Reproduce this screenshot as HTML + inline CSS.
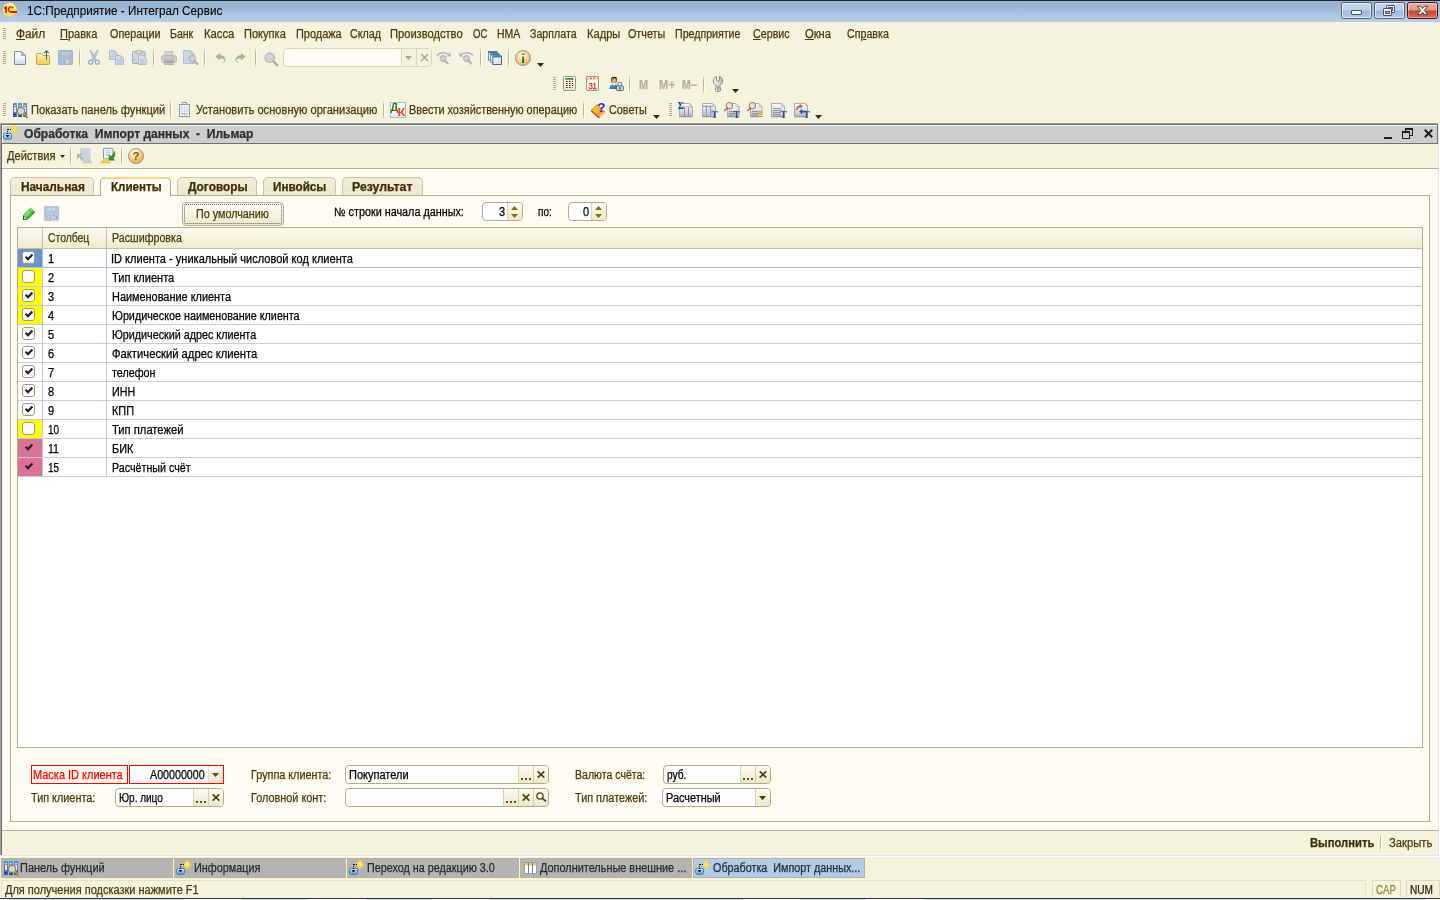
<!DOCTYPE html>
<html lang="ru">
<head>
<meta charset="utf-8">
<title>1С:Предприятие - Интеграл Сервис</title>
<style>
html,body{margin:0;padding:0;}
body{width:1440px;height:900px;overflow:hidden;position:relative;background:#f5f2dd;font-family:"Liberation Sans",sans-serif;font-size:12px;line-height:14px;color:#4a3a0a;}
#app{position:absolute;left:0;top:0;width:1440px;height:900px;overflow:hidden;will-change:transform;}
.a{position:absolute;}
.t{position:absolute;white-space:nowrap;height:14px;line-height:14px;font-size:12px;transform-origin:0 0;-webkit-text-stroke:0.25px currentColor;}
.k{color:#000;}
.b{font-weight:bold;}
u{text-decoration:underline;text-decoration-thickness:1px;text-underline-offset:1px;}
svg{position:absolute;overflow:visible;}
.sep{position:absolute;width:2px;background:linear-gradient(to bottom,rgba(194,182,136,0),#c2b688 25%,#c2b688 75%,rgba(194,182,136,0)) left/1px 100% no-repeat,linear-gradient(to bottom,rgba(255,255,255,0),#fffefa 25%,#fffefa 75%,rgba(255,255,255,0)) right/1px 100% no-repeat;}
.grip{position:absolute;width:3px;background:repeating-linear-gradient(to bottom,#b2aa82 0,#b2aa82 1px,transparent 1px,transparent 2px);}
.inp{position:absolute;box-sizing:border-box;height:19px;border:1px solid #b3ac86;border-radius:4px;background:#fff;overflow:hidden;}
.ib{position:absolute;top:0;bottom:0;width:15px;border-left:1px solid #d6d0b0;background:linear-gradient(#fdfcf5,#ece7cb);}
</style>
</head>
<body>
<div id="app">
<!-- ===== OS title bar ===== -->
<div class="a" style="left:0;top:0;width:1440px;height:22px;background:linear-gradient(#98b3d3 0,#9bb6d6 30%,#adc8e4 72%,#b7d0eb 100%);"></div>
<div class="a" style="left:0;top:0;width:1440px;height:1px;background:#242424;"></div>
<!-- app logo -->
<svg style="left:2px;top:2px" width="16" height="16" viewBox="0 0 16 16">
<defs><linearGradient id="lg1" x1="0" y1="0" x2="0" y2="1"><stop offset="0" stop-color="#fffce8"/><stop offset="0.3" stop-color="#fff36a"/><stop offset="0.6" stop-color="#ffe93c"/><stop offset="0.8" stop-color="#fbd98e"/><stop offset="1" stop-color="#f6d27e"/></linearGradient></defs>
<circle cx="7.9" cy="7.9" r="7.1" fill="url(#lg1)" stroke="#e6c24a" stroke-width="0.7"/>
<path d="M2.2 6.3L4 5V10.9" fill="none" stroke="#e80a0a" stroke-width="1.6"/>
<path d="M11.2 6.1A2.6 2.6 0 1 0 9.2 10.1" fill="none" stroke="#e80a0a" stroke-width="1.3"/>
<path d="M8.8 10H15" fill="none" stroke="#e80a0a" stroke-width="1.9"/>
</svg>
<span class="t k" style="left:26.70px;transform:scaleX(0.9778);top:4px;-webkit-text-stroke:0.1px #000;">1С:Предприятие - Интеграл Сервис</span>
<!-- caption buttons -->
<div class="a" style="left:1341px;top:2px;width:31px;height:17px;box-sizing:border-box;border:1px solid #56627a;border-radius:2.5px;background:linear-gradient(#c6d8ee 0,#bdd1ea 48%,#9fbadb 52%,#b0c8e6 100%);box-shadow:inset 0 0 0 1px rgba(255,255,255,.55);"></div>
<div class="a" style="left:1351px;top:10px;width:11px;height:5px;box-sizing:border-box;border:1px solid #4b5365;border-radius:1px;background:#f2f2f2;"></div>
<div class="a" style="left:1374px;top:2px;width:31px;height:17px;box-sizing:border-box;border:1px solid #56627a;border-radius:2.5px;background:linear-gradient(#c6d8ee 0,#bdd1ea 48%,#9fbadb 52%,#b0c8e6 100%);box-shadow:inset 0 0 0 1px rgba(255,255,255,.55);"></div>
<div class="a" style="left:1386px;top:5px;width:9px;height:8px;box-sizing:border-box;border:1px solid #4b5365;border-radius:1px;background:#f2f2f2;"></div>
<div class="a" style="left:1388px;top:7px;width:5px;height:4px;box-sizing:border-box;border:1px solid #4b5365;background:#b4c8e2;"></div>
<div class="a" style="left:1383px;top:8px;width:9px;height:8px;box-sizing:border-box;border:1px solid #4b5365;border-radius:1px;background:#f2f2f2;"></div>
<div class="a" style="left:1385px;top:11px;width:5px;height:3px;box-sizing:border-box;border:1px solid #4b5365;background:#a4bcdb;"></div>
<div class="a" style="left:1407px;top:2px;width:31px;height:17px;box-sizing:border-box;border:1px solid #4f1414;border-radius:2.5px;background:linear-gradient(#eab0a2 0,#e29482 48%,#c4472b 52%,#d8705a 100%);box-shadow:inset 0 0 0 1px rgba(255,255,255,.35);"></div>
<svg style="left:1416px;top:5px" width="13" height="11" viewBox="0 0 13 11"><path d="M1.2 1.3H4.6L6.5 3.5L8.4 1.3H11.8L8.3 5.4L11.8 9.6H8.4L6.5 7.3L4.6 9.6H1.2L4.7 5.4Z" fill="#f6f6f6" stroke="#46404e" stroke-width="1" stroke-linejoin="round"/></svg>
<!-- ===== main menu ===== -->
<div class="grip" style="left:3px;top:28px;height:12px;"></div>
<span class="t" style="left:16.30px;transform:scaleX(0.9864);top:27px;"><u>Ф</u>айл</span>
<span class="t" style="left:60.40px;transform:scaleX(0.9202);top:27px;"><u>П</u>равка</span>
<span class="t" style="left:110.40px;transform:scaleX(0.9020);top:27px;">Операции</span>
<span class="t" style="left:169.80px;transform:scaleX(0.8795);top:27px;">Банк</span>
<span class="t" style="left:203.70px;transform:scaleX(0.9399);top:27px;">Касса</span>
<span class="t" style="left:243.70px;transform:scaleX(0.9213);top:27px;">Покупка</span>
<span class="t" style="left:295.60px;transform:scaleX(0.9105);top:27px;">Продажа</span>
<span class="t" style="left:350.40px;transform:scaleX(0.8956);top:27px;">Склад</span>
<span class="t" style="left:390.40px;transform:scaleX(0.9279);top:27px;">Производство</span>
<span class="t" style="left:472.70px;transform:scaleX(0.7963);top:27px;">ОС</span>
<span class="t" style="left:496.70px;transform:scaleX(0.8739);top:27px;">НМА</span>
<span class="t" style="left:530.00px;transform:scaleX(0.8871);top:27px;">Зарплата</span>
<span class="t" style="left:586.50px;transform:scaleX(0.9281);top:27px;">Кадры</span>
<span class="t" style="left:628.40px;transform:scaleX(0.8959);top:27px;">Отчеты</span>
<span class="t" style="left:675.00px;transform:scaleX(0.8845);top:27px;">Предприятие</span>
<span class="t" style="left:753.30px;transform:scaleX(0.8931);top:27px;"><u>С</u>ервис</span>
<span class="t" style="left:805.00px;transform:scaleX(0.9323);top:27px;"><u>О</u>кна</span>
<span class="t" style="left:846.90px;transform:scaleX(0.8882);top:27px;">Сп<u>р</u>авка</span>
<!-- ===== toolbar row 1 ===== -->
<div class="grip" style="left:3px;top:51px;height:13px;"></div>
<svg style="left:14px;top:51px" width="12" height="14" viewBox="0 0 12 14"><defs><linearGradient id="nd" x1="0" y1="0" x2="0" y2="1"><stop offset="0" stop-color="#ffffff"/><stop offset="0.5" stop-color="#f2f7fb"/><stop offset="1" stop-color="#c4dcee"/></linearGradient></defs><path d="M0.5 0.5H7.5L11.5 4.5V13.5H0.5Z" fill="url(#nd)" stroke="#7893ae" stroke-width="1"/><path d="M7.5 0.8V4.5H11.2Z" fill="#b4c6d8" stroke="#7893ae" stroke-width="0.6"/></svg>
<svg style="left:36px;top:50px" width="15" height="16" viewBox="0 0 15 16"><defs><linearGradient id="of" x1="0" y1="0" x2="0" y2="1"><stop offset="0" stop-color="#fdf4b8"/><stop offset="0.6" stop-color="#f6dc7a"/><stop offset="1" stop-color="#f0c858"/></linearGradient></defs><path d="M0.5 4.5C0.5 3.8 1 3.5 1.6 3.5H5.5L7.5 5.5H12.6C13.2 5.5 13.5 5.9 13.5 6.5V13.6C13.5 14.2 13.2 14.5 12.6 14.5H1.4C0.8 14.5 0.5 14.2 0.5 13.6Z" fill="url(#of)" stroke="#c8a042" stroke-width="1"/><path d="M10.5 9.8V1.2" stroke="#2f5f7f" stroke-width="1" fill="none"/><path d="M8.2 3.2L10.5 0.7L12.8 3.2" stroke="#2f5f7f" stroke-width="1.1" fill="none"/></svg>
<svg style="left:58px;top:50px" width="15" height="15" viewBox="0 0 15 15"><rect x="0.5" y="0.5" width="14" height="14" rx="0.8" fill="#aabfd5" stroke="#9cb4cc"/><rect x="3" y="1.3" width="9" height="4.6" fill="#bfd0dc" stroke="#9fb5c9" stroke-width="0.6"/><path d="M4 3H11M4 4.6H11" stroke="#a9c3cf" stroke-width="0.8"/><rect x="3.8" y="9" width="7.6" height="5" fill="#cfd0d2" stroke="#9fb5c9" stroke-width="0.6"/><rect x="5.2" y="10.2" width="1.8" height="3.2" fill="#8fa8c2"/></svg>
<div class="sep" style="left:79px;top:48px;height:20px;"></div>
<svg style="left:88px;top:50px" width="12" height="15" viewBox="0 0 12 15"><path d="M1.8 0.6L3.4 0.6L7.6 9.4L6 10.4Z" fill="#b4cbe0" stroke="#94a9c2" stroke-width="0.6"/><path d="M10.2 0.6L8.6 0.6L4.4 9.4L6 10.4Z" fill="#b4cbe0" stroke="#94a9c2" stroke-width="0.6"/><rect x="0.8" y="10.2" width="3.8" height="4" rx="1.2" fill="#f5f2dd" stroke="#8fa8c6" stroke-width="1.3"/><rect x="7.4" y="10.2" width="3.8" height="4" rx="1.2" fill="#f5f2dd" stroke="#8fa8c6" stroke-width="1.3"/></svg>
<svg style="left:109px;top:50px" width="15" height="15" viewBox="0 0 15 15"><path d="M0.5 0.5H5.5L8.5 3.5V9.5H0.5Z" fill="#d4d7de" stroke="#a9b9d6"/><path d="M5.5 0.8V3.5H8.2Z" fill="#b9c8de"/><path d="M2 5H6.5M2 6.8H6.5" stroke="#aec8e0" stroke-width="0.9"/><path d="M6.5 5.5H11.5L14.5 8.5V14.5H6.5Z" fill="#d4d7de" stroke="#a9b9d6"/><path d="M11.5 5.8V8.5H14.2Z" fill="#b9c8de"/><path d="M8 10H13M8 11.8H13M8 13.4H13" stroke="#aec8e0" stroke-width="0.9"/><path d="M6.5 14.6H14.5" stroke="#a4d0d4" stroke-width="0.7"/></svg>
<svg style="left:132px;top:50px" width="15" height="15" viewBox="0 0 15 15"><rect x="0.5" y="1.5" width="12.6" height="12" rx="0.8" fill="#d2d5db" stroke="#96accc"/><rect x="4" y="0.4" width="5.8" height="3.4" rx="1.2" fill="#dcdcc0" stroke="#b9a98a" stroke-width="0.8"/><path d="M6.5 5.5H11.5L14.5 8.5V14.5H6.5Z" fill="#d8dbe2" stroke="#a6c0de"/><path d="M8 9.6H12M8 11.4H13M8 13H13" stroke="#aec8e0" stroke-width="0.9"/><path d="M2.4 9H4.4V12H2.4Z" fill="none" stroke="#b8cce0" stroke-width="0.6"/></svg>
<div class="sep" style="left:153px;top:48px;height:20px;"></div>
<svg style="left:161px;top:51px" width="16" height="14" viewBox="0 0 16 14"><rect x="4" y="0.5" width="7.5" height="5" fill="#ccd9e6" stroke="#aabdd2" stroke-width="0.8"/><rect x="0.5" y="4.5" width="15" height="7" rx="2" fill="#cfc8c2" stroke="#b2b8c4" stroke-width="0.9"/><rect x="3.5" y="9" width="9" height="4.5" fill="#c4c4c8" stroke="#a9a9b0" stroke-width="0.8"/><path d="M4.5 11H11.5" stroke="#8e8e96" stroke-width="1.2"/><path d="M3 7.5H12" stroke="#d8c0b4" stroke-width="0.9"/><circle cx="12.3" cy="7.3" r="0.7" fill="#8fc88f"/></svg>
<svg style="left:183px;top:50px" width="16" height="15" viewBox="0 0 16 15"><path d="M0.5 0.5H7.5L11.5 4.5V13.5H0.5Z" fill="#c9d6e4" stroke="#adc1d8"/><path d="M7.5 0.8V4.5H11.2Z" fill="#b4c6da"/><circle cx="9.3" cy="8.8" r="3.1" fill="#c6d4ea" stroke="#c9b2a6" stroke-width="1.2"/><path d="M11.6 11.2L14.6 14.2" stroke="#b9a294" stroke-width="1.9" stroke-linecap="round"/></svg>
<div class="sep" style="left:204px;top:48px;height:20px;"></div>
<svg style="left:215px;top:53px" width="11" height="10" viewBox="0 0 11 10"><path d="M0.3 3.6L5 0V2.2C8.8 2.2 10.8 4.6 10.5 8.6C9.6 6.2 8 5.2 5 5.2V7.4Z" fill="#9fb69c"/><path d="M7.6 9.8C9.4 9.2 10 7.8 10 6.4" stroke="#c2cfc0" stroke-width="1.2" fill="none"/></svg>
<svg style="left:235px;top:53px" width="11" height="10" viewBox="0 0 11 10"><g transform="translate(11,0) scale(-1,1)"><path d="M0.3 3.6L5 0V2.2C8.8 2.2 10.8 4.6 10.5 8.6C9.6 6.2 8 5.2 5 5.2V7.4Z" fill="#9fb69c"/><path d="M7.6 9.8C9.4 9.2 10 7.8 10 6.4" stroke="#c2cfc0" stroke-width="1.2" fill="none"/></g></svg>
<div class="sep" style="left:255px;top:48px;height:20px;"></div>
<svg style="left:264px;top:52px" width="15" height="15" viewBox="0 0 15 15"><circle cx="5.7" cy="5.7" r="4.7" fill="#c6d3e8" stroke="#c6b2a8" stroke-width="1.3"/><path d="M9.2 9.2L13.4 13.4" stroke="#bda99c" stroke-width="2.3" stroke-linecap="round"/></svg>
<div class="a" style="left:283px;top:48px;width:149px;height:19px;box-sizing:border-box;border:1px solid #dcd6ba;border-radius:4px;background:#fffbf0;"></div>
<div class="a" style="left:401px;top:49px;width:30px;height:17px;background:#f5f2dd;border-left:1px solid #dcd6ba;box-sizing:border-box;border-radius:0 3px 3px 0;"></div>
<div class="a" style="left:416px;top:49px;width:1px;height:17px;background:#dcd6ba;"></div>
<svg style="left:405px;top:56px" width="7" height="4" viewBox="0 0 7 4"><path d="M0 0H7L3.5 4Z" fill="#a8a496"/></svg>
<svg style="left:420px;top:53px" width="9" height="9" viewBox="0 0 9 9"><path d="M1 1L8 8M8 1L1 8" stroke="#a8a496" stroke-width="1.3"/></svg>
<svg style="left:436px;top:51px" width="15" height="14" viewBox="0 0 15 14"><path d="M1 4.5C4 0.8 10 0.8 13.5 4" stroke="#a6bad0" stroke-width="1.5" fill="none"/><path d="M14.6 1.2V5.4H10.6Z" fill="#a6bad0"/><circle cx="7" cy="7.5" r="2.8" fill="#c6d3e8" stroke="#c6b2a8" stroke-width="1.2"/><path d="M9.2 9.8L11.9 12.6" stroke="#bda99c" stroke-width="1.9" stroke-linecap="round"/></svg>
<svg style="left:459px;top:51px" width="15" height="14" viewBox="0 0 15 14"><g transform="translate(15,0) scale(-1,1)"><path d="M1 4.5C4 0.8 10 0.8 13.5 4" stroke="#a6bad0" stroke-width="1.5" fill="none"/><path d="M14.6 1.2V5.4H10.6Z" fill="#a6bad0"/></g><circle cx="7.5" cy="7.5" r="2.8" fill="#c6d3e8" stroke="#c6b2a8" stroke-width="1.2"/><path d="M9.7 9.8L12.4 12.6" stroke="#bda99c" stroke-width="1.9" stroke-linecap="round"/></svg>
<div class="sep" style="left:480px;top:48px;height:20px;"></div>
<svg style="left:488px;top:51px" width="14" height="14" viewBox="0 0 14 14"><defs><linearGradient id="wg" x1="0" y1="0" x2="1" y2="1"><stop offset="0" stop-color="#ffffff"/><stop offset="1" stop-color="#c8daee"/></linearGradient></defs><rect x="0.5" y="0.5" width="8.6" height="8.6" fill="url(#wg)" stroke="#4a78a8" stroke-width="0.8"/><rect x="0.6" y="0.6" width="8.4" height="1.6" fill="#3f70a4"/><rect x="2.7" y="2.7" width="8.6" height="8.6" fill="url(#wg)" stroke="#4a78a8" stroke-width="0.8"/><rect x="2.8" y="2.8" width="8.4" height="1.6" fill="#3f70a4"/><rect x="4.9" y="4.9" width="8.6" height="8.6" fill="url(#wg)" stroke="#2f5f90" stroke-width="0.9"/><rect x="5" y="5" width="8.4" height="1.4" fill="#4a7ab0"/></svg>
<div class="sep" style="left:508px;top:48px;height:20px;"></div>
<svg style="left:515px;top:50px" width="16" height="16" viewBox="0 0 16 16"><defs><radialGradient id="ig" cx="0.45" cy="0.4" r="0.62"><stop offset="0" stop-color="#fff8ea"/><stop offset="0.55" stop-color="#f9d49a"/><stop offset="1" stop-color="#f2a53c"/></radialGradient><linearGradient id="ii" x1="0" y1="0" x2="0" y2="1"><stop offset="0" stop-color="#5aa236"/><stop offset="1" stop-color="#17640a"/></linearGradient></defs><circle cx="8" cy="8" r="7.5" fill="url(#ig)" stroke="#8e8e9c" stroke-width="0.9"/><rect x="6.3" y="5.9" width="3.6" height="7.6" rx="0.6" fill="#fff" opacity="0.55"/><rect x="6.9" y="6.4" width="2.4" height="6.6" fill="url(#ii)"/><path d="M6.9 5V3.9L9.3 2.9V5Z" fill="#3f8a22"/></svg>
<svg style="left:537px;top:63px" width="7" height="4" viewBox="0 0 7 4"><path d="M0 0H7L3.5 4Z" fill="#3a2a04"/></svg>
<!-- ===== toolbar row 2 ===== -->
<div class="grip" style="left:553px;top:77px;height:13px;"></div>
<svg style="left:563px;top:76px" width="13" height="15" viewBox="0 0 13 15"><defs><linearGradient id="cg" x1="0" y1="0" x2="0" y2="1"><stop offset="0" stop-color="#fffaf0"/><stop offset="1" stop-color="#fbdfb4"/></linearGradient></defs><rect x="0.5" y="0.5" width="12" height="14" rx="0.8" fill="url(#cg)" stroke="#8a9aa8"/><rect x="2.2" y="2" width="8" height="1.8" rx="0.5" fill="#3f9a2f"/><rect x="8.8" y="2.2" width="1.2" height="1.4" fill="#1f5a1a"/><rect x="3" y="5" width="1.6" height="1" fill="#2a2a30"/><rect x="6" y="5" width="1.6" height="1" fill="#2a2a30"/><rect x="9" y="5" width="1.0" height="1" fill="#e02a1a"/><rect x="3" y="7" width="1.6" height="1" fill="#2a2a30"/><rect x="6" y="7" width="1.6" height="1" fill="#2a2a30"/><rect x="9" y="7" width="1.0" height="1" fill="#2a2a30"/><rect x="3" y="9" width="1.6" height="1" fill="#2a2a30"/><rect x="6" y="9" width="1.6" height="1" fill="#2a2a30"/><rect x="9" y="9" width="1.0" height="1" fill="#2a2a30"/><rect x="3" y="11" width="1.6" height="1" fill="#2a2a30"/><rect x="6" y="11" width="1.6" height="1" fill="#2a2a30"/><rect x="9" y="11" width="1.0" height="1" fill="#c8782a"/></svg>
<svg style="left:586px;top:76px" width="13" height="15" viewBox="0 0 13 15"><defs><linearGradient id="cl" x1="0" y1="0" x2="0" y2="1"><stop offset="0" stop-color="#ffffff"/><stop offset="0.6" stop-color="#fffaf4"/><stop offset="1" stop-color="#fbdcc0"/></linearGradient></defs><rect x="0.5" y="0.5" width="12" height="14" rx="0.6" fill="url(#cl)" stroke="#8a9aa8"/><rect x="1" y="1" width="11" height="2.8" fill="#f6cc94"/><rect x="2.4" y="1.6" width="1.4" height="1.4" fill="#fff"/><rect x="5.8" y="1.6" width="1.4" height="1.4" fill="#fff"/><rect x="9.2" y="1.6" width="1.4" height="1.4" fill="#fff"/><path d="M3.8 2.3H5.8M7.2 2.3H9.2" stroke="#7a5a3a" stroke-width="0.8"/><text x="6.6" y="12.9" font-family="Liberation Sans, sans-serif" font-size="9.8" fill="#e82a1a" text-anchor="middle" textLength="8.4" lengthAdjust="spacingAndGlyphs" stroke="#e82a1a" stroke-width="0.3">31</text></svg>
<svg style="left:609px;top:76px" width="15" height="15" viewBox="0 0 15 15"><defs><radialGradient id="uh" cx="0.5" cy="0.6" r="0.6"><stop offset="0" stop-color="#f8c870"/><stop offset="1" stop-color="#c8821e"/></radialGradient><linearGradient id="ub" x1="0" y1="0" x2="1" y2="1"><stop offset="0" stop-color="#4fb0e8"/><stop offset="1" stop-color="#14609c"/></linearGradient></defs><circle cx="5.1" cy="3.9" r="3.1" fill="#2c2016"/><circle cx="5.1" cy="4.5" r="2.6" fill="url(#uh)"/><path d="M0.2 13C0.4 9.6 2.4 8.2 5.1 8.2C7.6 8.2 9.4 9.6 9.8 13Z" fill="url(#ub)"/><path d="M3.8 8.3L5.1 10L6.4 8.3Z" fill="#fff"/><path d="M8.9 10.2V8.2C8.9 5.8 12.7 5.8 12.7 8.2V10.2" stroke="#7f98b4" stroke-width="1.3" fill="none"/><rect x="7.4" y="9.8" width="6.9" height="4.8" rx="0.9" fill="#ccd6e2" stroke="#56677e" stroke-width="1"/><rect x="10.2" y="11" width="1.3" height="2.4" fill="#3e4c62"/></svg>
<div class="sep" style="left:629px;top:75px;height:19px;"></div>
<span class="t b" style="left:639.00px;transform:scaleX(0.9000);top:78px;color:#b9b0a6;">M</span>
<span class="t b" style="left:659.00px;transform:scaleX(0.9414);top:78px;color:#b9b0a6;">M+</span>
<span class="t b" style="left:682.00px;transform:scaleX(0.8826);top:78px;color:#b9b0a6;">M−</span>
<div class="sep" style="left:703px;top:75px;height:19px;"></div>
<svg style="left:713px;top:76px" width="11" height="16" viewBox="0 0 11 16"><defs><linearGradient id="wr" x1="0" y1="0" x2="1" y2="0"><stop offset="0" stop-color="#f4f4f4"/><stop offset="0.5" stop-color="#e2e2e2"/><stop offset="1" stop-color="#b4b4b4"/></linearGradient></defs><path d="M3.5 0.6C1.5 1.2 0.4 2.9 0.4 5C0.4 7 1.6 8.6 3.3 9.4L2.4 13.6C2.2 15 3.4 15.5 5 15.5C6.6 15.5 7.8 15 7.6 13.6L6.7 9.4C8.4 8.6 9.6 7 9.6 5C9.6 2.9 8.5 1.2 6.5 0.6L6.5 4.4C6.5 5.4 3.5 5.4 3.5 4.4Z" fill="url(#wr)" stroke="#7c7c80" stroke-width="0.9" stroke-linejoin="round"/><path d="M5 10.5V13.8" stroke="#8a8a8e" stroke-width="1.4" stroke-linecap="round"/></svg>
<svg style="left:732px;top:89px" width="7" height="4" viewBox="0 0 7 4"><path d="M0 0H7L3.5 4Z" fill="#3a2a04"/></svg>
<!-- ===== toolbar row 3 ===== -->
<div class="grip" style="left:3px;top:103px;height:13px;"></div>
<svg style="left:13px;top:103px" width="15" height="15" viewBox="0 0 15 15"><defs><linearGradient id="pf13103" x1="0" y1="0" x2="0" y2="1"><stop offset="0" stop-color="#4f90ea"/><stop offset="0.6" stop-color="#3a78dc"/><stop offset="1" stop-color="#1f4ebc"/></linearGradient></defs><rect x="0" y="0" width="3.9" height="14" rx="0.5" fill="url(#pf13103)"/><rect x="1" y="2.2" width="1.9" height="7" fill="#d4f0ff"/><rect x="1" y="3" width="1.9" height="0.9" fill="#e0623a"/><rect x="5.1" y="0" width="3.9" height="14" rx="0.5" fill="url(#pf13103)"/><rect x="6.1" y="2.2" width="1.9" height="7" fill="#d4f0ff"/><rect x="6.1" y="3" width="1.9" height="0.9" fill="#e0623a"/><rect x="10.2" y="0" width="3.9" height="14" rx="0.5" fill="url(#pf13103)"/><rect x="11.2" y="2.2" width="1.9" height="7" fill="#d4f0ff"/><rect x="11.2" y="3" width="1.9" height="0.9" fill="#e0623a"/><circle cx="1.6" cy="11.6" r="0.7" fill="#101830"/><rect x="5.6" y="13" width="3" height="0.8" fill="#163c9c"/><circle cx="8" cy="8" r="3.5" fill="#cfe8fc" stroke="#b07a22" stroke-width="1.2"/><path d="M8 5V11" stroke="#7fb0e0" stroke-width="1" opacity="0.7"/><path d="M11 11L14.2 14.2" stroke="#e8962a" stroke-width="2" stroke-linecap="round"/><path d="M11.3 12L13.8 14.8" stroke="#7a3a0a" stroke-width="0.7"/></svg>
<span class="t" style="left:30.80px;transform:scaleX(0.9258);top:103px;">Показать панель функций</span>
<div class="sep" style="left:170px;top:100px;height:20px;"></div>
<svg style="left:179px;top:102px" width="11" height="15" viewBox="0 0 11 15"><rect x="3.5" y="0.5" width="4" height="2.4" fill="#fafbfe" stroke="#8a9ab8" stroke-width="1"/><rect x="0.5" y="2.6" width="10" height="12" fill="#fbfcff" stroke="#8494b4" stroke-width="1"/><path d="M3 4V12M5.5 4V12M8 4V12M1.5 5.5H9.5M1.5 7.5H9.5M1.5 9.5H9.5M1.5 11.5H9.5" stroke="#cfd6e6" stroke-width="0.9"/><path d="M3.4 14V11.8H7.6V14" stroke="#9aa8c4" stroke-width="0.9" fill="none"/><path d="M5.5 12V14" stroke="#b4c0d6" stroke-width="0.8"/></svg>
<span class="t" style="left:195.80px;transform:scaleX(0.9262);top:103px;">Установить основную организацию</span>
<div class="sep" style="left:383px;top:100px;height:20px;"></div>
<svg style="left:390px;top:102px" width="16" height="16" viewBox="0 0 16 16"><defs><linearGradient id="dkg" x1="0" y1="0" x2="0" y2="1"><stop offset="0" stop-color="#ffffff"/><stop offset="0.6" stop-color="#ffffff"/><stop offset="1" stop-color="#d4e4f2"/></linearGradient></defs><rect x="0.5" y="0.5" width="15" height="15" fill="url(#dkg)" stroke="#a9bac4"/><text x="0.6" y="8.9" font-family="Liberation Sans, sans-serif" font-weight="bold" font-size="10.5" fill="#2a7a18" textLength="7.6" lengthAdjust="spacingAndGlyphs">Д</text><text x="7.6" y="14.2" font-family="Liberation Sans, sans-serif" font-weight="bold" font-size="11.5" fill="#f03a1e" textLength="7.8" lengthAdjust="spacingAndGlyphs">К</text></svg>
<span class="t" style="left:408.80px;transform:scaleX(0.9076);top:103px;">Ввести хозяйственную операцию</span>
<div class="sep" style="left:583px;top:100px;height:20px;"></div>
<svg style="left:591px;top:102px" width="15" height="16" viewBox="0 0 15 16"><defs><linearGradient id="sv" x1="0" y1="0.2" x2="1" y2="0.9"><stop offset="0" stop-color="#ffe81e"/><stop offset="0.55" stop-color="#fba028"/><stop offset="1" stop-color="#ee6a1a"/></linearGradient></defs><path d="M0.3 8.6L6 2.5L13.8 10.3L7.8 15.8Z" fill="url(#sv)" stroke="#b8501a" stroke-width="0.7"/><path d="M0.3 8.6L7.8 15.8" stroke="#9a3a0c" stroke-width="1.1"/><path d="M8.6 14.6L13.2 10.4" stroke="#fff" stroke-width="1.6"/><path d="M8.6 14.6L13.2 10.4" stroke="#e04a20" stroke-width="1.6" stroke-dasharray="0.7 0.9"/><text x="6.6" y="9.8" font-family="Liberation Sans, sans-serif" font-weight="bold" font-size="13" fill="#1818f4">?</text></svg>
<span class="t" style="left:609.00px;transform:scaleX(0.8996);top:103px;">Советы</span>
<svg style="left:653px;top:115px" width="7" height="4" viewBox="0 0 7 4"><path d="M0 0H7L3.5 4Z" fill="#3a2a04"/></svg>
<div class="grip" style="left:669px;top:103px;height:13px;"></div>
<svg style="left:678px;top:102px" width="16" height="16" viewBox="0 0 16 16"><defs><linearGradient id="dga" x1="0" y1="0" x2="0" y2="1"><stop offset="0" stop-color="#fafafc"/><stop offset="0.45" stop-color="#e6e6ea"/><stop offset="1" stop-color="#b4b4bc"/></linearGradient></defs><path d="M1.5 1.5H11.5L14.5 4.5V14.5H1.5Z" fill="url(#dga)" stroke="#a2a2ac" stroke-width="0.9"/><path d="M11.5 1.5V4.5H14.5" fill="none" stroke="#b4b4bc" stroke-width="0.7"/><path d="M1.5 14.8H14.5" stroke="#8c8c96" stroke-width="0.8"/><path d="M6.5 5V14.5M10.5 5V14.5" stroke="#8a92c4" stroke-width="1"/><path d="M2 5H14" stroke="#b0b0ba" stroke-width="0.8"/><text x="-0.2" y="7.2" font-family="Liberation Serif, serif" font-weight="bold" font-size="9.5" fill="#16409a">Σ</text></svg>
<svg style="left:702px;top:102px" width="16" height="16" viewBox="0 0 16 16"><defs><linearGradient id="dgb" x1="0" y1="0" x2="0" y2="1"><stop offset="0" stop-color="#fafafc"/><stop offset="0.45" stop-color="#e6e6ea"/><stop offset="1" stop-color="#b4b4bc"/></linearGradient></defs><path d="M0.5 1.5H10.5L13.5 4.5V14.5H0.5Z" fill="url(#dgb)" stroke="#a2a2ac" stroke-width="0.9"/><path d="M10.5 1.5V4.5H13.5" fill="none" stroke="#b4b4bc" stroke-width="0.7"/><path d="M0.5 14.8H13.5" stroke="#8c8c96" stroke-width="0.8"/><rect x="1" y="3.6" width="9.6" height="1.6" fill="#9aa0b0"/><path d="M4.5 5V14.5M8.5 5V14.5" stroke="#8a92c4" stroke-width="1"/><path d="M1 8H12M1 11H12" stroke="#b8b8c2" stroke-width="0.7"/><text x="9.6" y="16.2" font-family="Liberation Serif, serif" font-weight="bold" font-size="9.5" fill="#16509e">T</text></svg>
<svg style="left:724px;top:102px" width="16" height="16" viewBox="0 0 16 16"><defs><linearGradient id="dgc" x1="0" y1="0" x2="0" y2="1"><stop offset="0" stop-color="#fafafc"/><stop offset="0.45" stop-color="#e6e6ea"/><stop offset="1" stop-color="#b4b4bc"/></linearGradient></defs><path d="M3.5 1.5H12L15 4.5V14.5H3.5Z" fill="url(#dgc)" stroke="#a2a2ac" stroke-width="0.9"/><path d="M12 1.5V4.5H15" fill="none" stroke="#b4b4bc" stroke-width="0.7"/><path d="M3.5 14.8H15" stroke="#8c8c96" stroke-width="0.8"/><path d="M5 9.5H12M5 11.5H12M5 13.2H10" stroke="#8c8c96" stroke-width="0.9"/><circle cx="5.4" cy="3.6" r="3.1" fill="#d6e8fa" stroke="#b87a4a" stroke-width="1.1"/><path d="M3.2 6L0.7 8.6" stroke="#b06a3a" stroke-width="1.5" stroke-linecap="round"/><text x="9.6" y="16.2" font-family="Liberation Serif, serif" font-weight="bold" font-size="9.5" fill="#16509e">T</text></svg>
<svg style="left:747px;top:102px" width="16" height="16" viewBox="0 0 16 16"><defs><linearGradient id="dgd" x1="0" y1="0" x2="0" y2="1"><stop offset="0" stop-color="#fafafc"/><stop offset="0.45" stop-color="#e6e6ea"/><stop offset="1" stop-color="#b4b4bc"/></linearGradient></defs><path d="M3.5 1.5H12L15 4.5V14.5H3.5Z" fill="url(#dgd)" stroke="#a2a2ac" stroke-width="0.9"/><path d="M12 1.5V4.5H15" fill="none" stroke="#b4b4bc" stroke-width="0.7"/><path d="M3.5 14.8H15" stroke="#8c8c96" stroke-width="0.8"/><path d="M5 9.5H11M5 11.5H11M5 13.2H11" stroke="#8c8c96" stroke-width="0.9"/><circle cx="5.4" cy="3.6" r="3.1" fill="#d6e8fa" stroke="#b87a4a" stroke-width="1.1"/><path d="M3.2 6L0.7 8.6" stroke="#b06a3a" stroke-width="1.5" stroke-linecap="round"/><rect x="11" y="9.3" width="4.8" height="6.4" fill="#f4f0e0"/><path d="M11 10H15.8M11 12.2H15.8M11 14.4H15.8" stroke="#c89a28" stroke-width="1.3"/></svg>
<svg style="left:771px;top:102px" width="16" height="16" viewBox="0 0 16 16"><defs><linearGradient id="dge" x1="0" y1="0" x2="0" y2="1"><stop offset="0" stop-color="#fafafc"/><stop offset="0.45" stop-color="#e6e6ea"/><stop offset="1" stop-color="#b4b4bc"/></linearGradient></defs><path d="M0.5 1.5H10.5L13.5 4.5V14.5H0.5Z" fill="url(#dge)" stroke="#a2a2ac" stroke-width="0.9"/><path d="M10.5 1.5V4.5H13.5" fill="none" stroke="#b4b4bc" stroke-width="0.7"/><path d="M0.5 14.8H13.5" stroke="#8c8c96" stroke-width="0.8"/><path d="M2 6.5H10.5M2 8.5H10.5M2 10.5H9M2 12.5H9" stroke="#8c8c96" stroke-width="0.9"/><text x="9.6" y="16.2" font-family="Liberation Serif, serif" font-weight="bold" font-size="9.5" fill="#16509e">T</text></svg>
<svg style="left:794px;top:102px" width="16" height="16" viewBox="0 0 16 16"><defs><linearGradient id="dgf" x1="0" y1="0" x2="0" y2="1"><stop offset="0" stop-color="#fafafc"/><stop offset="0.45" stop-color="#e6e6ea"/><stop offset="1" stop-color="#b4b4bc"/></linearGradient></defs><path d="M0.5 1.5H11.5L13.5 3.5V14.5H0.5Z" fill="url(#dgf)" stroke="#a2a2ac" stroke-width="0.9"/><path d="M11.5 1.5V3.5H13.5" fill="none" stroke="#b4b4bc" stroke-width="0.7"/><path d="M0.5 14.8H13.5" stroke="#8c8c96" stroke-width="0.8"/><path d="M2.8 8C2.8 5.4 4.4 4.2 6.4 4.2" stroke="#c8642a" stroke-width="1.5" fill="none"/><path d="M5.6 1.8L9 4.2L5.6 6.8Z" fill="#c8642a"/><path d="M12.5 9.6H8" stroke="#1a5aa8" stroke-width="1.6" fill="none"/><path d="M8.4 6.8L5.2 9.6L8.4 12.4Z" fill="#1a5aa8"/><text x="9.6" y="16.2" font-family="Liberation Serif, serif" font-weight="bold" font-size="9.5" fill="#16509e">T</text></svg>
<svg style="left:815px;top:115px" width="7" height="4" viewBox="0 0 7 4"><path d="M0 0H7L3.5 4Z" fill="#3a2a04"/></svg>
<!-- ===== inner window frame ===== -->
<div class="a" style="left:0;top:123px;width:1438px;height:733px;background:#f5f2dd;"></div>
<div class="a" style="left:0;top:123px;width:1438px;height:1px;background:#a2a2a2;"></div>
<div class="a" style="left:1px;top:124px;width:1437px;height:1px;background:#6a6a6a;"></div>
<div class="a" style="left:0;top:123px;width:1px;height:733px;background:#a2a2a2;"></div>
<div class="a" style="left:1px;top:124px;width:1px;height:732px;background:#6a6a6a;"></div>
<div class="a" style="left:2px;top:125px;width:1436px;height:1px;background:#fff;"></div>
<div class="a" style="left:2px;top:125px;width:1px;height:19px;background:#fff;"></div>
<div class="a" style="left:1438px;top:126px;width:1px;height:730px;background:#e6e6ea;"></div><div class="a" style="left:1439px;top:124px;width:1px;height:733px;background:#fff;"></div>
<div class="a" style="left:3px;top:126px;width:1434px;height:17px;background:#cecece;"></div>
<div class="a" style="left:2px;top:143px;width:1436px;height:1px;background:#6f6f6f;"></div>
<div class="a" style="left:1437px;top:125px;width:1px;height:19px;background:#6f6f6f;"></div>
<svg style="left:3px;top:124px" width="16" height="16" viewBox="0 0 16 16"><defs><linearGradient id="pi3124" x1="0" y1="0" x2="0" y2="1"><stop offset="0" stop-color="#e8f4fd"/><stop offset="0.6" stop-color="#8cc6ec"/><stop offset="1" stop-color="#5d9fd0"/></linearGradient><radialGradient id="pd3124" cx="0.5" cy="0.45" r="0.6"><stop offset="0" stop-color="#fff04a"/><stop offset="1" stop-color="#fbd83a"/></radialGradient></defs><rect x="0.7" y="9.4" width="7.8" height="5.9" rx="1.7" fill="url(#pi3124)" stroke="#3a78a8" stroke-width="1"/><path d="M11.05 1.1L14.8 5.5L11.05 9.9L7.3 5.5Z" fill="url(#pd3124)" stroke="#ecca72" stroke-width="0.7"/><path d="M4.5 5V11.5" stroke="#111" stroke-width="1" stroke-dasharray="1 1" fill="none"/><path d="M5 5.5H8" stroke="#111" stroke-width="1" stroke-dasharray="1 1" fill="none"/><path d="M2.4 11H6.6L4.5 13.5Z" fill="#111"/></svg>
<span class="t b" style="left:24.00px;transform:scaleX(1.0047);top:127px;color:#2e2e2e;">Обработка &nbsp;Импорт данных &nbsp;- &nbsp;Ильмар</span>
<div class="a" style="left:1384px;top:137px;width:8px;height:2px;background:#1e1e1e;"></div>
<div class="a" style="left:1405px;top:128px;width:8px;height:8px;box-sizing:border-box;border:1px solid #1e1e1e;border-top-width:2px;"></div>
<div class="a" style="left:1402px;top:131px;width:8px;height:8px;box-sizing:border-box;border:1px solid #1e1e1e;border-top-width:2px;background:#cecece;"></div>
<svg style="left:1424px;top:129px" width="9" height="9" viewBox="0 0 9 9"><path d="M0.8 0.8L8.2 8.2M8.2 0.8L0.8 8.2" stroke="#1e1e1e" stroke-width="2"/></svg>
<span class="t" style="left:7.00px;transform:scaleX(0.9217);top:149px;">Действия</span>
<svg style="left:60px;top:155px" width="5" height="3" viewBox="0 0 5 3"><path d="M0 0H5L2.5 3Z" fill="#3a2a04"/></svg>
<div class="sep" style="left:70px;top:146px;height:20px;"></div>
<svg style="left:77px;top:148px" width="16" height="16" viewBox="0 0 16 16"><rect x="3.5" y="0.4" width="9.4" height="12.2" rx="0.8" fill="#d3dbe6" stroke="#bccbdc" stroke-width="0.9"/><path d="M5.2 2.8H11.2M5.2 4.8H11.2M5.2 6.8H11.2M6.5 8.8H11.2" stroke="#b8c8dc" stroke-width="0.9"/><path d="M0 6H5.6L3.9 7.7L7.2 11L6 12.2L2.7 8.9L0 11.6Z" fill="#a9bba6"/><path d="M5.6 15L10.4 9L15.2 15Z" fill="#d0cec4" stroke="#c2c0b4" stroke-width="0.5"/></svg>
<svg style="left:101px;top:148px" width="16" height="16" viewBox="0 0 16 16"><rect x="2.5" y="0.4" width="9.4" height="10.4" rx="0.6" fill="#f6f9fc" stroke="#7f9ab8" stroke-width="1"/><path d="M4.2 2.8H10.2M4.2 4.8H10.2M4.2 6.8H8" stroke="#a9b9cc" stroke-width="0.9"/><path d="M8 12.3V6.6L9.9 8.5C11.6 7.2 12.8 5.6 13.4 3.2C14.6 6.2 13.8 8.6 12.1 10.5L13.8 12.3Z" fill="#2c9a22" stroke="#1c6a14" stroke-width="0.4"/><path d="M-0.4 15L4.5 9.8L9.4 15Z" fill="#f4cf3c" stroke="#d8aa22" stroke-width="0.5"/></svg>
<div class="sep" style="left:121px;top:146px;height:20px;"></div>
<svg style="left:128px;top:148px" width="16" height="16" viewBox="0 0 16 16"><defs><radialGradient id="hg" cx="0.38" cy="0.25" r="0.85"><stop offset="0" stop-color="#fff8e6"/><stop offset="0.45" stop-color="#fbd890"/><stop offset="1" stop-color="#f39c1e"/></radialGradient></defs><circle cx="8" cy="8" r="7.5" fill="url(#hg)" stroke="#8c8c98" stroke-width="0.9"/><text x="8" y="12.1" font-family="Liberation Sans, sans-serif" font-weight="bold" font-size="11.5" fill="#7a4a28" text-anchor="middle">?</text></svg>
<div class="a" style="left:2px;top:167px;width:1436px;height:1px;background:#faf7e6;"></div><div class="a" style="left:2px;top:168px;width:1436px;height:1px;background:#b7b086;"></div>
<div class="a" style="left:2px;top:169px;width:1436px;height:661px;background:#fffbf0;"></div>
<div class="a" style="left:10px;top:195px;width:1420px;height:627px;box-sizing:border-box;border:1px solid #b5ae88;background:#fffbf0;"></div>
<div class="a" style="left:10px;top:177px;width:84px;height:18px;box-sizing:border-box;border:1px solid #cbc5a4;border-bottom:none;border-radius:5px 5px 0 0;background:linear-gradient(#f3efdb,#ece7cf);"></div>
<span class="t b" style="left:20.50px;transform:scaleX(0.9876);top:180px;color:#3c2e06;">Начальная</span>
<div class="a" style="left:177px;top:177px;width:80px;height:18px;box-sizing:border-box;border:1px solid #cbc5a4;border-bottom:none;border-radius:5px 5px 0 0;background:linear-gradient(#f3efdb,#ece7cf);"></div>
<span class="t b" style="left:187.90px;transform:scaleX(0.9904);top:180px;color:#3c2e06;">Договоры</span>
<div class="a" style="left:263px;top:177px;width:73px;height:18px;box-sizing:border-box;border:1px solid #cbc5a4;border-bottom:none;border-radius:5px 5px 0 0;background:linear-gradient(#f3efdb,#ece7cf);"></div>
<span class="t b" style="left:273.00px;transform:scaleX(0.9748);top:180px;color:#3c2e06;">Инвойсы</span>
<div class="a" style="left:342px;top:177px;width:81px;height:18px;box-sizing:border-box;border:1px solid #cbc5a4;border-bottom:none;border-radius:5px 5px 0 0;background:linear-gradient(#f3efdb,#ece7cf);"></div>
<span class="t b" style="left:352.40px;transform:scaleX(1.0261);top:180px;color:#3c2e06;">Результат</span>
<div class="a" style="left:100px;top:177px;width:71px;height:19px;box-sizing:border-box;border:1px solid #b5ae88;border-bottom:none;border-radius:5px 5px 0 0;background:#fffbf0;"></div>
<div class="a" style="left:103px;top:177px;width:65px;height:2px;background:#fbd58a;border-radius:2px 2px 0 0;"></div>
<span class="t b" style="left:110.80px;transform:scaleX(0.9650);top:180px;color:#3c2e06;">Клиенты</span>
<svg style="left:22px;top:207px" width="14" height="14" viewBox="0 0 14 14"><defs><linearGradient id="pg" x1="0" y1="0" x2="1" y2="1"><stop offset="0" stop-color="#3cb428"/><stop offset="0.45" stop-color="#8ae66a"/><stop offset="0.6" stop-color="#3cb428"/><stop offset="1" stop-color="#1c7a10"/></linearGradient></defs><path d="M8.5 1L13 5.3L5.5 12.5L1.2 8.3Z" fill="url(#pg)" stroke="#2a8a1a" stroke-width="0.5"/><path d="M7 2.4L11.5 6.8" stroke="#1c7a10" stroke-width="0.8" opacity="0.7"/><path d="M1.2 8.3L5.5 12.5L0.9 13.1Z" fill="#1a5a0c"/><path d="M2 9.6L4.2 11.8L2.2 12Z" fill="#ffffff"/></svg>
<svg style="left:44px;top:206px" width="15" height="15" viewBox="0 0 15 15"><rect x="0.4" y="0.4" width="14.2" height="14.2" rx="0.8" fill="#b6c9dc" stroke="#a9bfd4" stroke-width="0.8"/><rect x="3" y="1.6" width="8.6" height="4" fill="#cfdfe6" stroke="#a9bfd4" stroke-width="0.6"/><path d="M4 3H10.6M4 4.4H10.6" stroke="#a9cbd6" stroke-width="0.7"/><rect x="3.6" y="9.6" width="4.4" height="4.6" fill="#c9d3de" stroke="#a9bfd4" stroke-width="0.5"/><rect x="5" y="10.6" width="1.4" height="2.8" fill="#8fa8c4"/><rect x="8" y="9.4" width="7" height="5.4" fill="#dbe3ec"/><text x="8.2" y="14.4" font-family="Liberation Sans, sans-serif" font-weight="bold" font-size="6.6" fill="#86a0be" textLength="6.8" lengthAdjust="spacingAndGlyphs">OK</text></svg>
<div class="a" style="left:182px;top:202px;width:102px;height:24px;box-sizing:border-box;border:1px solid #b5ae88;border-radius:4px;background:linear-gradient(#fffefa,#f6f3e2 55%,#ebe6cc);"></div>
<div class="a" style="left:184px;top:204px;width:98px;height:20px;box-sizing:border-box;border:1px dotted #6a6040;border-radius:2px;"></div>
<span class="t" style="left:196.40px;transform:scaleX(0.8983);top:207px;">По умолчанию</span>
<span class="t k" style="left:333.80px;transform:scaleX(0.9001);top:205px;">№ строки начала данных:</span>
<div class="inp" style="left:482px;top:202px;width:41px;"><div class="ib" style="left:24px;width:15px;"></div></div>
<svg style="left:511px;top:206px" width="7" height="4" viewBox="0 0 7 4"><path d="M0 4L3.5 0L7 4Z" fill="#8a6a10"/></svg>
<svg style="left:511px;top:214px" width="7" height="4" viewBox="0 0 7 4"><path d="M0 0L3.5 4L7 0Z" fill="#8a6a10"/></svg>
<span class="t k" style="left:498.56px;transform:scaleX(0.9200);top:205px;">3</span>
<span class="t k" style="left:537.50px;transform:scaleX(0.8348);top:205px;">по:</span>
<div class="inp" style="left:568px;top:202px;width:39px;"><div class="ib" style="left:22px;width:15px;"></div></div>
<svg style="left:595px;top:206px" width="7" height="4" viewBox="0 0 7 4"><path d="M0 4L3.5 0L7 4Z" fill="#8a6a10"/></svg>
<svg style="left:595px;top:214px" width="7" height="4" viewBox="0 0 7 4"><path d="M0 0L3.5 4L7 0Z" fill="#8a6a10"/></svg>
<span class="t k" style="left:582.56px;transform:scaleX(0.9200);top:205px;">0</span>
<!-- ===== table ===== -->
<div class="a" style="left:17px;top:227px;width:1406px;height:521px;box-sizing:border-box;border:1px solid #b5ae88;background:#fff;"></div>
<div class="a" style="left:18px;top:228px;width:1404px;height:20px;background:linear-gradient(#fbf9ef 0,#f6f3e0 50%,#efe9cf 100%);"></div>
<div class="a" style="left:18px;top:248px;width:1404px;height:1px;background:#c9c2a0;"></div>
<div class="a" style="left:42px;top:228px;width:1px;height:20px;background:#c9c2a0;"></div>
<div class="a" style="left:106px;top:228px;width:1px;height:20px;background:#c9c2a0;"></div>
<span class="t" style="left:47.60px;transform:scaleX(0.8652);top:231px;">Столбец</span>
<span class="t" style="left:111.80px;transform:scaleX(0.8918);top:231px;">Расшифровка</span>
<div class="a" style="left:42px;top:249px;width:1px;height:228px;background:#c6ced9;"></div>
<div class="a" style="left:106px;top:249px;width:1px;height:228px;background:#c6ced9;"></div>
<div class="a" style="left:18px;top:249px;width:24px;height:18px;background:#6a93cf;"></div>
<div class="a" style="left:18px;top:267px;width:1404px;height:1px;background:#a9c4ec;"></div>
<div class="a" style="left:42px;top:249px;width:1px;height:18px;background:#a9c4ec;"></div>
<div class="a" style="left:106px;top:249px;width:1px;height:18px;background:#a9c4ec;"></div>
<div class="a" style="left:22px;top:251px;width:13px;height:13px;box-sizing:border-box;border:1px solid #a39b78;border-radius:3px;background:#fff;"></div>
<svg style="left:25px;top:254px" width="8" height="7" viewBox="0 0 8 7"><path d="M0.6 2.8L3 5.2L7.4 0.6" stroke="#241a20" stroke-width="2.2" fill="none"/></svg>
<span class="t k" style="left:48.00px;transform:scaleX(0.9200);top:252px;">1</span>
<span class="t k" style="left:111.08px;transform:scaleX(0.9203);top:252px;">ID клиента - уникальный числовой код клиента</span>
<div class="a" style="left:18px;top:268px;width:24px;height:18px;background:#ffff00;"></div>
<div class="a" style="left:18px;top:286px;width:1404px;height:1px;background:#c6ced9;"></div>
<div class="a" style="left:22px;top:270px;width:13px;height:13px;box-sizing:border-box;border:1px solid #a39b78;border-radius:3px;background:#fff;"></div>
<span class="t k" style="left:48.00px;transform:scaleX(0.9200);top:271px;">2</span>
<span class="t k" style="left:111.60px;transform:scaleX(0.9179);top:271px;">Тип клиента</span>
<div class="a" style="left:18px;top:287px;width:24px;height:18px;background:#ffff00;"></div>
<div class="a" style="left:18px;top:305px;width:1404px;height:1px;background:#c6ced9;"></div>
<div class="a" style="left:22px;top:289px;width:13px;height:13px;box-sizing:border-box;border:1px solid #a39b78;border-radius:3px;background:#fff;"></div>
<svg style="left:25px;top:292px" width="8" height="7" viewBox="0 0 8 7"><path d="M0.6 2.8L3 5.2L7.4 0.6" stroke="#241a20" stroke-width="2.2" fill="none"/></svg>
<span class="t k" style="left:48.00px;transform:scaleX(0.9200);top:290px;">3</span>
<span class="t k" style="left:112.00px;transform:scaleX(0.9088);top:290px;">Наименование клиента</span>
<div class="a" style="left:18px;top:306px;width:24px;height:18px;background:#ffff00;"></div>
<div class="a" style="left:18px;top:324px;width:1404px;height:1px;background:#c6ced9;"></div>
<div class="a" style="left:22px;top:308px;width:13px;height:13px;box-sizing:border-box;border:1px solid #a39b78;border-radius:3px;background:#fff;"></div>
<svg style="left:25px;top:311px" width="8" height="7" viewBox="0 0 8 7"><path d="M0.6 2.8L3 5.2L7.4 0.6" stroke="#241a20" stroke-width="2.2" fill="none"/></svg>
<span class="t k" style="left:48.00px;transform:scaleX(0.9200);top:309px;">4</span>
<span class="t k" style="left:112.00px;transform:scaleX(0.8972);top:309px;">Юридическое наименование клиента</span>
<div class="a" style="left:18px;top:343px;width:1404px;height:1px;background:#c6ced9;"></div>
<div class="a" style="left:22px;top:327px;width:13px;height:13px;box-sizing:border-box;border:1px solid #a39b78;border-radius:3px;background:#fff;"></div>
<svg style="left:25px;top:330px" width="8" height="7" viewBox="0 0 8 7"><path d="M0.6 2.8L3 5.2L7.4 0.6" stroke="#241a20" stroke-width="2.2" fill="none"/></svg>
<span class="t k" style="left:48.00px;transform:scaleX(0.9200);top:328px;">5</span>
<span class="t k" style="left:112.00px;transform:scaleX(0.8956);top:328px;">Юридический адрес клиента</span>
<div class="a" style="left:18px;top:362px;width:1404px;height:1px;background:#c6ced9;"></div>
<div class="a" style="left:22px;top:346px;width:13px;height:13px;box-sizing:border-box;border:1px solid #a39b78;border-radius:3px;background:#fff;"></div>
<svg style="left:25px;top:349px" width="8" height="7" viewBox="0 0 8 7"><path d="M0.6 2.8L3 5.2L7.4 0.6" stroke="#241a20" stroke-width="2.2" fill="none"/></svg>
<span class="t k" style="left:48.00px;transform:scaleX(0.9200);top:347px;">6</span>
<span class="t k" style="left:111.60px;transform:scaleX(0.9369);top:347px;">Фактический адрес клиента</span>
<div class="a" style="left:18px;top:381px;width:1404px;height:1px;background:#c6ced9;"></div>
<div class="a" style="left:22px;top:365px;width:13px;height:13px;box-sizing:border-box;border:1px solid #a39b78;border-radius:3px;background:#fff;"></div>
<svg style="left:25px;top:368px" width="8" height="7" viewBox="0 0 8 7"><path d="M0.6 2.8L3 5.2L7.4 0.6" stroke="#241a20" stroke-width="2.2" fill="none"/></svg>
<span class="t k" style="left:48.00px;transform:scaleX(0.9200);top:366px;">7</span>
<span class="t k" style="left:111.60px;transform:scaleX(0.8943);top:366px;">телефон</span>
<div class="a" style="left:18px;top:400px;width:1404px;height:1px;background:#c6ced9;"></div>
<div class="a" style="left:22px;top:384px;width:13px;height:13px;box-sizing:border-box;border:1px solid #a39b78;border-radius:3px;background:#fff;"></div>
<svg style="left:25px;top:387px" width="8" height="7" viewBox="0 0 8 7"><path d="M0.6 2.8L3 5.2L7.4 0.6" stroke="#241a20" stroke-width="2.2" fill="none"/></svg>
<span class="t k" style="left:48.00px;transform:scaleX(0.9200);top:385px;">8</span>
<span class="t k" style="left:112.00px;transform:scaleX(0.8896);top:385px;">ИНН</span>
<div class="a" style="left:18px;top:419px;width:1404px;height:1px;background:#c6ced9;"></div>
<div class="a" style="left:22px;top:403px;width:13px;height:13px;box-sizing:border-box;border:1px solid #a39b78;border-radius:3px;background:#fff;"></div>
<svg style="left:25px;top:406px" width="8" height="7" viewBox="0 0 8 7"><path d="M0.6 2.8L3 5.2L7.4 0.6" stroke="#241a20" stroke-width="2.2" fill="none"/></svg>
<span class="t k" style="left:48.00px;transform:scaleX(0.9200);top:404px;">9</span>
<span class="t k" style="left:112.00px;transform:scaleX(0.9104);top:404px;">КПП</span>
<div class="a" style="left:18px;top:420px;width:24px;height:18px;background:#ffff00;"></div>
<div class="a" style="left:18px;top:438px;width:1404px;height:1px;background:#c6ced9;"></div>
<div class="a" style="left:22px;top:422px;width:13px;height:13px;box-sizing:border-box;border:1px solid #a39b78;border-radius:3px;background:#fff;"></div>
<span class="t k" style="left:48.00px;transform:scaleX(0.8264);top:423px;">10</span>
<span class="t k" style="left:111.60px;transform:scaleX(0.9334);top:423px;">Тип платежей</span>
<div class="a" style="left:18px;top:439px;width:24px;height:18px;background:#dd7095;"></div>
<div class="a" style="left:18px;top:457px;width:1404px;height:1px;background:#c6ced9;"></div>
<svg style="left:25px;top:444px" width="8" height="7" viewBox="0 0 8 7"><path d="M0.6 2.8L3 5.2L7.4 0.6" stroke="#241a20" stroke-width="2.2" fill="none"/></svg>
<span class="t k" style="left:48.00px;transform:scaleX(0.8840);top:442px;">11</span>
<span class="t k" style="left:112.00px;transform:scaleX(0.9064);top:442px;">БИК</span>
<div class="a" style="left:18px;top:458px;width:24px;height:18px;background:#dd7095;"></div>
<div class="a" style="left:18px;top:476px;width:1404px;height:1px;background:#c6ced9;"></div>
<svg style="left:25px;top:463px" width="8" height="7" viewBox="0 0 8 7"><path d="M0.6 2.8L3 5.2L7.4 0.6" stroke="#241a20" stroke-width="2.2" fill="none"/></svg>
<span class="t k" style="left:48.00px;transform:scaleX(0.8264);top:461px;">15</span>
<span class="t k" style="left:112.00px;transform:scaleX(0.8923);top:461px;">Расчётный счёт</span>
<!-- ===== bottom fields ===== -->
<div class="a" style="left:31px;top:765px;width:97px;height:19px;box-sizing:border-box;border:1px solid #ff0000;background:#fffbf0;"></div>
<span class="t" style="left:33.00px;transform:scaleX(0.9145);top:768px;color:#ff0000;">Маска ID клиента</span>
<div class="a" style="left:129px;top:765px;width:95px;height:19px;box-sizing:border-box;border:1px solid #ff0000;background:#fff;"></div>
<div class="a" style="left:208px;top:766px;width:15px;height:17px;background:linear-gradient(#fdfcf5,#ece7cb);border-left:1px solid #e4dfc4;box-sizing:border-box;"></div>
<svg style="left:212px;top:773px" width="7" height="4" viewBox="0 0 7 4"><path d="M0 0H7L3.5 4Z" fill="#6a4c04"/></svg>
<span class="t k" style="left:150.00px;transform:scaleX(0.8911);top:768px;">A00000000</span>
<span class="t" style="left:31.00px;transform:scaleX(0.9044);top:791px;">Тип клиента:</span>
<div class="inp" style="left:115px;top:788px;width:109px;"><div class="ib" style="left:77px;width:15px;"></div><div class="ib" style="left:92px;width:15px;"></div></div>
<svg style="left:196px;top:801px" width="10" height="2" viewBox="0 0 10 2"><rect x="0" y="0" width="2" height="2" fill="#6a4e06"/><rect x="4" y="0" width="2" height="2" fill="#6a4e06"/><rect x="8" y="0" width="2" height="2" fill="#6a4e06"/></svg>
<svg style="left:212px;top:794px" width="8" height="7" viewBox="0 0 8 7"><path d="M0.7 0.4L7.3 6.6M7.3 0.4L0.7 6.6" stroke="#523c02" stroke-width="1.6"/></svg>
<span class="t k" style="left:119.00px;transform:scaleX(0.8316);top:791px;">Юр. лицо</span>
<span class="t" style="left:251.00px;transform:scaleX(0.9010);top:768px;">Группа клиента:</span>
<div class="inp" style="left:345px;top:765px;width:204px;"><div class="ib" style="left:172px;width:15px;"></div><div class="ib" style="left:187px;width:15px;"></div></div>
<svg style="left:521px;top:778px" width="10" height="2" viewBox="0 0 10 2"><rect x="0" y="0" width="2" height="2" fill="#6a4e06"/><rect x="4" y="0" width="2" height="2" fill="#6a4e06"/><rect x="8" y="0" width="2" height="2" fill="#6a4e06"/></svg>
<svg style="left:537px;top:771px" width="8" height="7" viewBox="0 0 8 7"><path d="M0.7 0.4L7.3 6.6M7.3 0.4L0.7 6.6" stroke="#523c02" stroke-width="1.6"/></svg>
<span class="t k" style="left:349.00px;transform:scaleX(0.9186);top:768px;">Покупатели</span>
<span class="t" style="left:251.00px;transform:scaleX(0.9057);top:791px;">Головной конт:</span>
<div class="inp" style="left:345px;top:788px;width:204px;"><div class="ib" style="left:157px;width:15px;"></div><div class="ib" style="left:172px;width:15px;"></div><div class="ib" style="left:187px;width:15px;"></div></div>
<svg style="left:506px;top:801px" width="10" height="2" viewBox="0 0 10 2"><rect x="0" y="0" width="2" height="2" fill="#6a4e06"/><rect x="4" y="0" width="2" height="2" fill="#6a4e06"/><rect x="8" y="0" width="2" height="2" fill="#6a4e06"/></svg>
<svg style="left:522px;top:794px" width="8" height="7" viewBox="0 0 8 7"><path d="M0.7 0.4L7.3 6.6M7.3 0.4L0.7 6.6" stroke="#523c02" stroke-width="1.6"/></svg>
<svg style="left:536px;top:792px" width="11" height="10" viewBox="0 0 11 10"><circle cx="4" cy="4" r="3.2" fill="none" stroke="#523c02" stroke-width="1.2"/><path d="M6.4 6.4L10 9.4" stroke="#523c02" stroke-width="1.8"/></svg>
<span class="t" style="left:575.00px;transform:scaleX(0.8793);top:768px;">Валюта счёта:</span>
<div class="inp" style="left:663px;top:765px;width:108px;"><div class="ib" style="left:76px;width:15px;"></div><div class="ib" style="left:91px;width:15px;"></div></div>
<svg style="left:743px;top:778px" width="10" height="2" viewBox="0 0 10 2"><rect x="0" y="0" width="2" height="2" fill="#6a4e06"/><rect x="4" y="0" width="2" height="2" fill="#6a4e06"/><rect x="8" y="0" width="2" height="2" fill="#6a4e06"/></svg>
<svg style="left:759px;top:771px" width="8" height="7" viewBox="0 0 8 7"><path d="M0.7 0.4L7.3 6.6M7.3 0.4L0.7 6.6" stroke="#523c02" stroke-width="1.6"/></svg>
<span class="t k" style="left:667.00px;transform:scaleX(0.8427);top:768px;">руб.</span>
<span class="t" style="left:575.00px;transform:scaleX(0.9051);top:791px;">Тип платежей:</span>
<div class="inp" style="left:662px;top:788px;width:109px;"><div class="ib" style="left:92px;width:15px;"></div></div>
<svg style="left:759px;top:796px" width="7" height="4" viewBox="0 0 7 4"><path d="M0 0H7L3.5 4Z" fill="#523c02"/></svg>
<span class="t k" style="left:666.00px;transform:scaleX(0.9088);top:791px;">Расчетный</span>
<!-- ===== form command bar ===== -->
<div class="a" style="left:2px;top:830px;width:1436px;height:1px;background:#b7b086;"></div>
<div class="a" style="left:2px;top:831px;width:1436px;height:24px;background:#f5f2dd;"></div>
<span class="t b" style="left:1310.00px;transform:scaleX(0.9368);top:836px;color:#3c2e06;">Выполнить</span>
<div class="sep" style="left:1380px;top:834px;height:18px;"></div>
<span class="t" style="left:1389.00px;transform:scaleX(0.9355);top:836px;">Закрыть</span>
<div class="a" style="left:0;top:855px;width:1439px;height:1px;background:#e6e6ea;"></div><div class="a" style="left:0;top:856px;width:1440px;height:1px;background:#fff;"></div>
<div class="a" style="left:0;top:857px;width:1440px;height:43px;background:#f5f2dd;"></div>
<!-- ===== window task bar ===== -->
<div class="a" style="left:1px;top:858px;width:172px;height:20px;box-sizing:border-box;border:1px solid #bcb388;background:#b4b4b4;"></div>
<svg style="left:4px;top:861px" width="15" height="15" viewBox="0 0 15 15"><defs><linearGradient id="pf4861" x1="0" y1="0" x2="0" y2="1"><stop offset="0" stop-color="#4f90ea"/><stop offset="0.6" stop-color="#3a78dc"/><stop offset="1" stop-color="#1f4ebc"/></linearGradient></defs><rect x="0" y="0" width="3.9" height="14" rx="0.5" fill="url(#pf4861)"/><rect x="1" y="2.2" width="1.9" height="7" fill="#d4f0ff"/><rect x="1" y="3" width="1.9" height="0.9" fill="#e0623a"/><rect x="5.1" y="0" width="3.9" height="14" rx="0.5" fill="url(#pf4861)"/><rect x="6.1" y="2.2" width="1.9" height="7" fill="#d4f0ff"/><rect x="6.1" y="3" width="1.9" height="0.9" fill="#e0623a"/><rect x="10.2" y="0" width="3.9" height="14" rx="0.5" fill="url(#pf4861)"/><rect x="11.2" y="2.2" width="1.9" height="7" fill="#d4f0ff"/><rect x="11.2" y="3" width="1.9" height="0.9" fill="#e0623a"/><circle cx="1.6" cy="11.6" r="0.7" fill="#101830"/><rect x="5.6" y="13" width="3" height="0.8" fill="#163c9c"/><circle cx="8" cy="8" r="3.5" fill="#cfe8fc" stroke="#b07a22" stroke-width="1.2"/><path d="M8 5V11" stroke="#7fb0e0" stroke-width="1" opacity="0.7"/><path d="M11 11L14.2 14.2" stroke="#e8962a" stroke-width="2" stroke-linecap="round"/><path d="M11.3 12L13.8 14.8" stroke="#7a3a0a" stroke-width="0.7"/></svg>
<span class="t" style="left:20.00px;transform:scaleX(0.9132);top:861px;color:#2a2a2a;">Панель функций</span>
<div class="a" style="left:174px;top:858px;width:172px;height:20px;box-sizing:border-box;border:1px solid #bcb388;background:#b4b4b4;"></div>
<svg style="left:176px;top:859px" width="16" height="16" viewBox="0 0 16 16"><defs><linearGradient id="pi176859" x1="0" y1="0" x2="0" y2="1"><stop offset="0" stop-color="#e8f4fd"/><stop offset="0.6" stop-color="#8cc6ec"/><stop offset="1" stop-color="#5d9fd0"/></linearGradient><radialGradient id="pd176859" cx="0.5" cy="0.45" r="0.6"><stop offset="0" stop-color="#fff04a"/><stop offset="1" stop-color="#fbd83a"/></radialGradient></defs><rect x="0.7" y="9.4" width="7.8" height="5.9" rx="1.7" fill="url(#pi176859)" stroke="#3a78a8" stroke-width="1"/><path d="M11.05 1.1L14.8 5.5L11.05 9.9L7.3 5.5Z" fill="url(#pd176859)" stroke="#ecca72" stroke-width="0.7"/><path d="M4.5 5V11.5" stroke="#111" stroke-width="1" stroke-dasharray="1 1" fill="none"/><path d="M5 5.5H8" stroke="#111" stroke-width="1" stroke-dasharray="1 1" fill="none"/><path d="M2.4 11H6.6L4.5 13.5Z" fill="#111"/></svg>
<span class="t" style="left:194.00px;transform:scaleX(0.9044);top:861px;color:#2a2a2a;">Информация</span>
<div class="a" style="left:347px;top:858px;width:172px;height:20px;box-sizing:border-box;border:1px solid #bcb388;background:#b4b4b4;"></div>
<svg style="left:349px;top:859px" width="16" height="16" viewBox="0 0 16 16"><defs><linearGradient id="pi349859" x1="0" y1="0" x2="0" y2="1"><stop offset="0" stop-color="#e8f4fd"/><stop offset="0.6" stop-color="#8cc6ec"/><stop offset="1" stop-color="#5d9fd0"/></linearGradient><radialGradient id="pd349859" cx="0.5" cy="0.45" r="0.6"><stop offset="0" stop-color="#fff04a"/><stop offset="1" stop-color="#fbd83a"/></radialGradient></defs><rect x="0.7" y="9.4" width="7.8" height="5.9" rx="1.7" fill="url(#pi349859)" stroke="#3a78a8" stroke-width="1"/><path d="M11.05 1.1L14.8 5.5L11.05 9.9L7.3 5.5Z" fill="url(#pd349859)" stroke="#ecca72" stroke-width="0.7"/><path d="M4.5 5V11.5" stroke="#111" stroke-width="1" stroke-dasharray="1 1" fill="none"/><path d="M5 5.5H8" stroke="#111" stroke-width="1" stroke-dasharray="1 1" fill="none"/><path d="M2.4 11H6.6L4.5 13.5Z" fill="#111"/></svg>
<span class="t" style="left:367.00px;transform:scaleX(0.8979);top:861px;color:#2a2a2a;">Переход на редакцию 3.0</span>
<div class="a" style="left:520px;top:858px;width:172px;height:20px;box-sizing:border-box;border:1px solid #bcb388;background:#b4b4b4;"></div>
<svg style="left:524px;top:862px" width="13" height="12" viewBox="0 0 13 12"><rect x="0.5" y="0.5" width="12" height="11" fill="#fff" stroke="#8f9cb4" stroke-width="0.9"/><rect x="1" y="1" width="11" height="2.4" fill="#f0c848"/><path d="M4.5 1V11.5M8.5 1V11.5" stroke="#6f86b4" stroke-width="1"/></svg>
<span class="t" style="left:540.00px;transform:scaleX(0.9089);top:861px;color:#2a2a2a;">Дополнительные внешние ...</span>
<div class="a" style="left:693px;top:858px;width:172px;height:20px;box-sizing:border-box;border:1px solid #bcb388;background:#b1cbe8;"></div>
<svg style="left:695px;top:859px" width="16" height="16" viewBox="0 0 16 16"><defs><linearGradient id="pi695859" x1="0" y1="0" x2="0" y2="1"><stop offset="0" stop-color="#e8f4fd"/><stop offset="0.6" stop-color="#8cc6ec"/><stop offset="1" stop-color="#5d9fd0"/></linearGradient><radialGradient id="pd695859" cx="0.5" cy="0.45" r="0.6"><stop offset="0" stop-color="#fff04a"/><stop offset="1" stop-color="#fbd83a"/></radialGradient></defs><rect x="0.7" y="9.4" width="7.8" height="5.9" rx="1.7" fill="url(#pi695859)" stroke="#3a78a8" stroke-width="1"/><path d="M11.05 1.1L14.8 5.5L11.05 9.9L7.3 5.5Z" fill="url(#pd695859)" stroke="#ecca72" stroke-width="0.7"/><path d="M4.5 5V11.5" stroke="#111" stroke-width="1" stroke-dasharray="1 1" fill="none"/><path d="M5 5.5H8" stroke="#111" stroke-width="1" stroke-dasharray="1 1" fill="none"/><path d="M2.4 11H6.6L4.5 13.5Z" fill="#111"/></svg>
<span class="t" style="left:713.00px;transform:scaleX(0.8980);top:861px;color:#20303a;">Обработка &nbsp;Импорт данных...</span>
<!-- ===== status bar ===== -->
<div class="a" style="left:0;top:879px;width:1440px;height:1px;background:#f8f6e6;"></div>
<div class="a" style="left:1px;top:880px;width:1365px;height:17px;box-sizing:border-box;border:1px solid #e6e1c8;border-bottom:none;"></div>
<span class="t" style="left:5.00px;transform:scaleX(0.9164);top:883px;">Для получения подсказки нажмите F1</span>
<div class="a" style="left:1372px;top:880px;width:29px;height:17px;box-sizing:border-box;border:1px solid #e0dbc0;border-bottom:none;"></div>
<span class="t" style="left:1376.00px;transform:scaleX(0.8107);top:883px;color:#9c8240;">CAP</span>
<div class="a" style="left:1406px;top:880px;width:34px;height:17px;box-sizing:border-box;border:1px solid #e0dbc0;border-bottom:none;"></div>
<span class="t" style="left:1410.00px;transform:scaleX(0.8415);top:883px;color:#2a2004;">NUM</span>
<div class="a" style="left:0;top:898px;width:1440px;height:1px;background:#2f3644;"></div>
<div class="a" style="left:0;top:899px;width:1440px;height:1px;background:#cbdcf2;"></div>
<div class="a" style="left:0px;top:899px;width:10px;height:1px;background:#f4f6fa;"></div>
<div class="a" style="left:184px;top:899px;width:58px;height:1px;background:#f4f6fa;"></div>
<div class="a" style="left:308px;top:899px;width:58px;height:1px;background:#f4f6fa;"></div>
<div class="a" style="left:432px;top:899px;width:58px;height:1px;background:#f4f6fa;"></div>
<div class="a" style="left:743px;top:899px;width:57px;height:1px;background:#f4f6fa;"></div>
<div class="a" style="left:866px;top:899px;width:58px;height:1px;background:#f4f6fa;"></div>
<div class="a" style="left:1426px;top:899px;width:14px;height:1px;background:#f4f6fa;"></div>
</div>
</body>
</html>
